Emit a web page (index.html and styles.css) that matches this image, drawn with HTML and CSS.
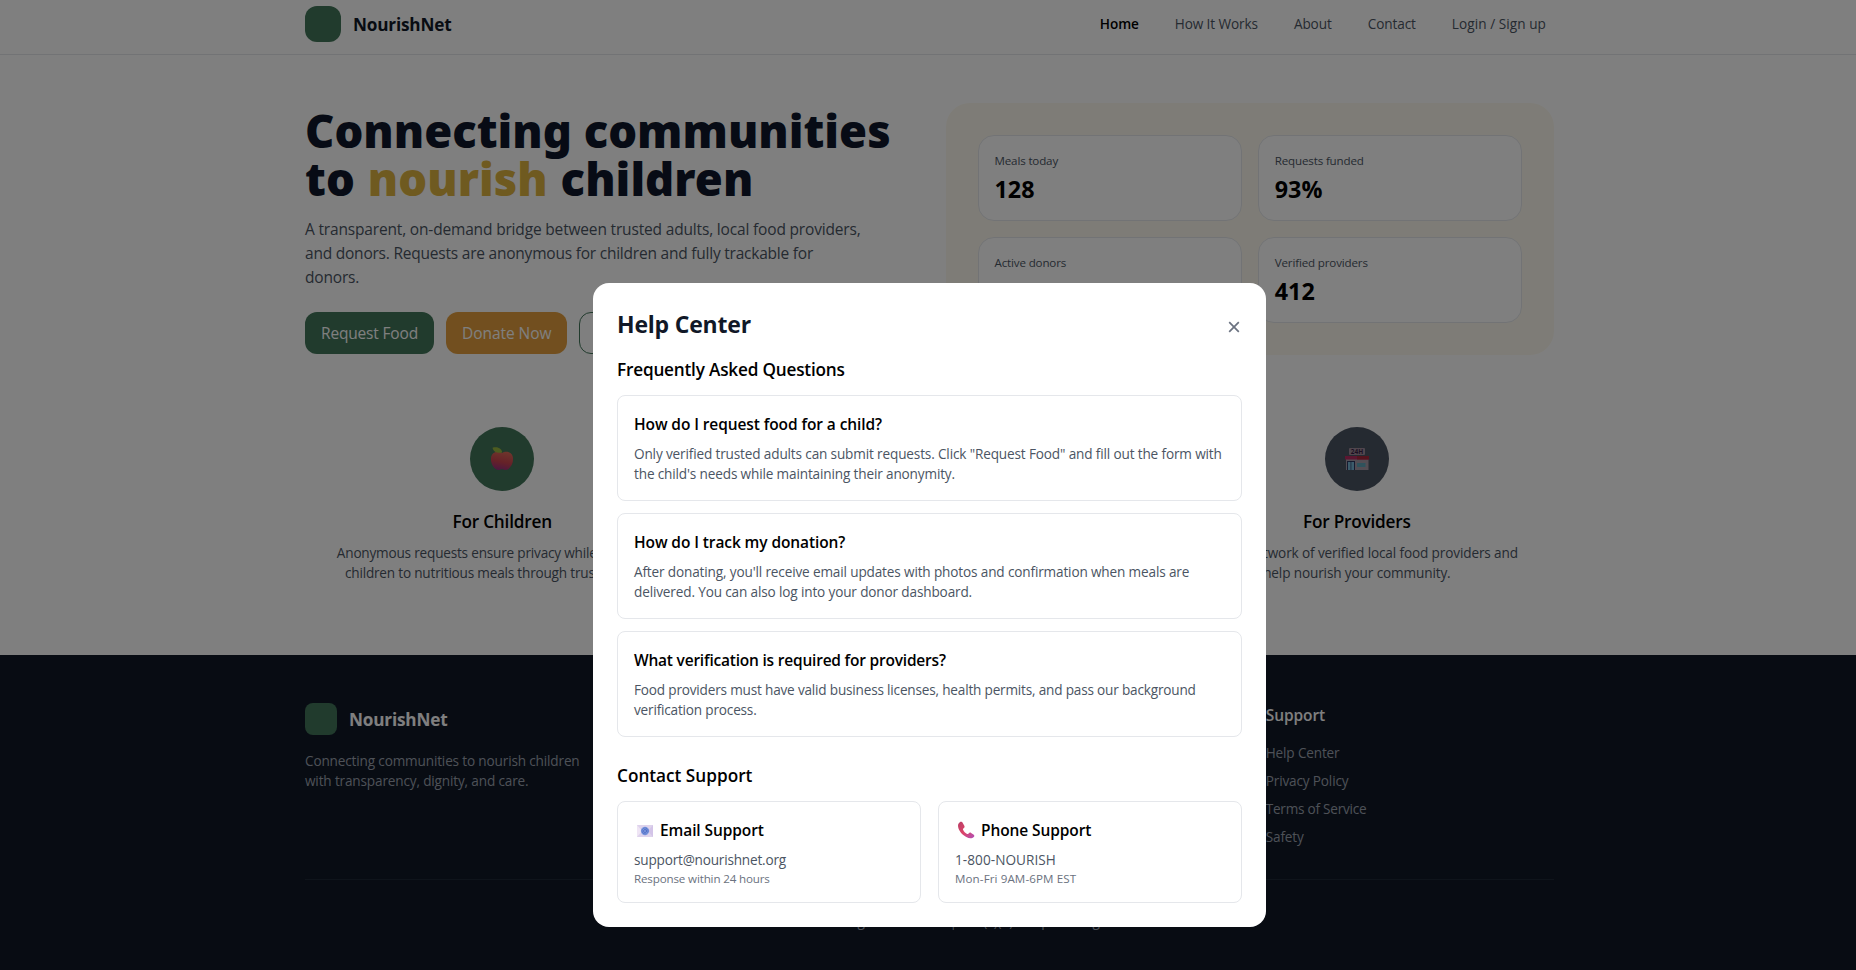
FILE: index.html
```
<!DOCTYPE html>
<html lang="en">
<head>
<meta charset="utf-8">
<title>NourishNet</title>
<link rel="stylesheet" href="styles.css">
</head>
<body>
<header class="site-header">
  <div class="container header-row">
    <div class="brand"><span class="brand-mark"></span><span class="brand-name">NourishNet</span></div>
    <nav class="nav">
      <a class="active">Home</a><a>How It Works</a><a>About</a><a>Contact</a><a class="login">Login / Sign up</a>
    </nav>
  </div>
</header>

<main>
  <section class="container hero">
    <div>
      <h1>Connecting communities<br><span class="line-two">to <em>nourish</em> children</span></h1>
      <p class="lead">A transparent, on-demand bridge between trusted adults, local food providers,<br><span class="snug">and donors. Requests are anonymous for children and fully trackable for</span><br>donors.</p>
      <div class="actions">
        <a class="btn btn-green">Request Food</a>
        <a class="btn btn-amber">Donate Now</a>
        <a class="btn btn-outline">About</a>
      </div>
    </div>
    <div class="stats">
      <div class="stat"><span class="label">Meals today</span><strong>128</strong></div>
      <div class="stat"><span class="label">Requests funded</span><strong>93%</strong></div>
      <div class="stat"><span class="label">Active donors</span><strong>56</strong></div>
      <div class="stat"><span class="label">Verified providers</span><strong>412</strong></div>
    </div>
  </section>

  <section class="container features">
    <div class="feature">
      <div class="disc disc-green">
        <svg width="24" height="26" viewBox="0 0 26 27">
          <defs><linearGradient id="apple" x1="0.6" y1="0" x2="0.35" y2="1"><stop offset="0" stop-color="#dd6a58"/><stop offset=".55" stop-color="#cc4450"/><stop offset="1" stop-color="#98307f"/></linearGradient></defs>
          <path d="M13 7c2-1.500 5-1.800 7.500-.9C23.500 7.200 25 10 25 13.500c0 5-2.500 9.200-6 11.400-2 1.200-4-.4-6-.4s-4 1.600-6 .4C3.500 22.700 1 18.500 1 13.500 1 10 2.500 7.200 5.500 6.100 8 5.200 11 5.500 13 7z" fill="url(#apple)"/>
          <path d="M2.800 1.200C7 0 12.500 1.200 13.200 6.400 9 7.400 3.500 6.200 2.800 1.200z" fill="#9bb840"/>
        </svg>
      </div>
      <h3>For Children</h3>
      <p>Anonymous requests ensure privacy while connecting<br>children to nutritious meals through trusted adults.</p>
    </div>
    <div class="feature">
      <div class="disc disc-amber"></div>
      <h3>For Donors</h3>
      <p>Track your impact in real time and see how<br>each donation helps.</p>
    </div>
    <div class="feature">
      <div class="disc disc-slate">
        <svg width="24" height="24" viewBox="0 0 24 24">
          <rect x="4" y="1" width="16" height="7" rx="1" fill="#a08c9c"/>
          <text x="12" y="6.900" text-anchor="middle" class="sign">24H</text>
          <rect x="1" y="11" width="22.500" height="12" fill="#a79aa8"/>
          <path d="M0 9h24v3.500H0z" fill="#b92d62"/>
          <path d="M12 9h12v3.500H12z" fill="#a8283c"/>
          <rect x="2" y="14" width="8" height="9" fill="#2c3760"/>
          <path d="M3 15h2.600v8H3zM6.300 15H9v8H6.300z" fill="#78b9d8"/>
          <rect x="12" y="16" width="8.500" height="4" fill="#5fa5b8"/>
        </svg>
      </div>
      <h3>For Providers</h3>
      <p class="wide">Join our network of verified local food providers and<br>help nourish your community.</p>
    </div>
  </section>
</main>

<footer class="site-footer">
  <div class="container footer-grid">
    <div>
      <div class="footer-brand"><span class="footer-mark"></span><span class="brand-name">NourishNet</span></div>
      <p>Connecting communities to nourish children<br>with transparency, dignity, and care.</p>
    </div>
    <div><h4>Platform</h4><ul><li>How It Works</li><li>Request Food</li><li>Donate</li></ul></div>
    <div><h4>Company</h4><ul><li>About</li><li>Contact</li></ul></div>
    <div><h4>Support</h4><ul><li>Help Center</li><li>Privacy Policy</li><li class="terms">Terms of Service</li><li>Safety</li></ul></div>
  </div>
  <div class="container"><p class="copyright">© 2024 NourishNet. All rights reserved. | 501(c)(3) nonprofit organization</p></div>
</footer>

<div class="overlay">
  <div class="modal">
    <div class="modal-head">
      <h2>Help Center</h2>
      <svg class="close" width="12" height="12" viewBox="0 0 12 12"><path d="M1.200 1.200l9.600 9.600M10.800 1.200L1.200 10.800" stroke="#6b7280" stroke-width="1.700" fill="none"/></svg>
    </div>
    <h3 class="section-title">Frequently Asked Questions</h3>
    <div class="faq">
      <div class="card"><h4>How do I request food for a child?</h4><p>Only verified trusted adults can submit requests. Click "Request Food" and fill out the form with<br>the child's needs while maintaining their anonymity.</p></div>
      <div class="card"><h4>How do I track my donation?</h4><p>After donating, you'll receive email updates with photos and confirmation when meals are<br>delivered. You can also log into your donor dashboard.</p></div>
      <div class="card"><h4 class="long">What verification is required for providers?</h4><p class="long">Food providers must have valid business licenses, health permits, and pass our background<br>verification process.</p></div>
    </div>
    <h3 class="section-title contact-title">Contact Support</h3>
    <div class="contacts">
      <div class="card">
        <h4 class="with-icon">
          <svg width="22" height="20" viewBox="0 0 22 20">
            <rect x="3" y="5" width="16" height="12" fill="#ded3ec"/>
            <path d="M3 5l5 6-5 6z" fill="#efe5f5"/><path d="M19 5l-5 6 5 6z" fill="#d3c4e8"/>
            <circle cx="11" cy="11" r="4.200" fill="#7f9be0"/>
            <circle cx="11" cy="11" r="1.500" fill="none" stroke="#4f6cc4" stroke-width=".9"/>
            <path d="M12.600 9.500v2.200c0 1 1.500 1 1.500-.7a3 3 0 1 0-1.600 2.600" fill="none" stroke="#4f6cc4" stroke-width=".8"/>
          </svg>
          Email Support
        </h4>
        <p class="email">support@nourishnet.org</p><small>Response within 24 hours</small>
      </div>
      <div class="card">
        <h4 class="with-icon">
          <svg width="22" height="20" viewBox="0 0 22 20">
            <defs><linearGradient id="phone" x1="0" y1="0" x2="1" y2="1"><stop offset="0" stop-color="#b84068"/><stop offset=".5" stop-color="#dd4468"/><stop offset="1" stop-color="#b050b8"/></linearGradient></defs>
            <path d="M4.800 2.200C6 1.400 7.200 2 7.900 3.200L9.300 5.700c.6 1.100.2 1.800-.7 2.500-.7.500-.8 1-.4 1.800.8 1.600 2 2.900 3.500 3.800.8.400 1.300.3 1.900-.4.700-.8 1.500-1.100 2.500-.5l2.300 1.500c1.100.7 1.200 1.700.4 2.600-1.700 1.800-4.600 1.700-7.500.1C7.100 14.800 4 11 3.200 7.300 2.700 5 3.200 3.200 4.800 2.200z" fill="url(#phone)"/>
          </svg>
          Phone Support
        </h4>
        <p class="phone">1-800-NOURISH</p><small class="hours">Mon-Fri 9AM-6PM EST</small>
      </div>
    </div>
  </div>
</div>
</body>
</html>
```

FILE: styles.css
```
* { box-sizing: border-box; margin: 0; padding: 0; }
html { overflow: hidden; background: #fff; }
body {
  position: relative;
  width: 1859px;
  height: 970px;
  overflow: hidden;
  font-family: "Open Sans", "Noto Sans", sans-serif;
  font-size: 15.1px;
  line-height: 24px;
  color: #000;
}
ul { list-style: none; }
.container { width: 1249px; margin: 0 auto; }

/* Header */
.site-header { height: 55px; padding-top: 6px; border-bottom: 1px solid #e5e7eb; }
.header-row { display: flex; justify-content: space-between; align-items: center; height: 36px; }
.brand { display: flex; align-items: center; gap: 12px; }
.brand-mark { width: 36px; height: 36px; border-radius: 12px; background: #42765a; }
.brand-name { padding-top: 1px; font-size: 17.2px; font-weight: 700; letter-spacing: -0.2px; color: #111827; }
.nav { display: flex; gap: 36px; padding-right: 8px; font-size: 13.6px; line-height: 20px; letter-spacing: -0.1px; color: #4b5563; }
.nav .active { font-weight: 600; color: #000; }
.nav .login { letter-spacing: 0.06px; }

/* Hero */
.hero { display: grid; grid-template-columns: 1fr 1fr; gap: 32px; padding-top: 48px; }
h1 {
  padding-top: 3px;
  font-family: "Noto Sans", sans-serif;
  font-size: 45.4px;
  font-weight: 900;
  line-height: 48px;
  color: #0f172a;
  white-space: nowrap;
}
.line-two { letter-spacing: 0.05px; word-spacing: 1px; }
h1 em { font-style: normal; color: #dfb441; }
.lead { margin-top: 15px; font-size: 15.500px; letter-spacing: -0.17px; color: #4b5563; white-space: nowrap; }
.snug { letter-spacing: -0.22px; }
.actions { display: flex; gap: 12px; margin-top: 23px; }
.btn {
  height: 42px;
  padding: 0 15px;
  border: 1px solid transparent;
  border-radius: 12px;
  font-size: 15.500px;
  line-height: 40px;
  letter-spacing: -0.17px;
  color: #fff;
  white-space: nowrap;
}
.btn-green { background: #42765a; }
.btn-amber { background: #e49f3e; letter-spacing: -0.05px; }
.btn-outline { border-color: #42765a; color: #42765a; }
.stats {
  display: grid;
  grid-template-columns: 1fr 1fr;
  gap: 16px;
  padding: 32px;
  border-radius: 24px;
  background: #fdf9ee;
}
.stat {
  display: flex;
  flex-direction: column;
  gap: 4px;
  height: 86px;
  padding: 16px;
  border: 1px solid #e5e7eb;
  border-radius: 16px;
  background: #fff;
}
.stat .label { font-size: 11.600px; line-height: 18px; letter-spacing: -0.16px; color: #4b5563; }
.stat strong { font-size: 23.300px; line-height: 30px; }

/* Features */
.features { display: grid; grid-template-columns: repeat(3, 1fr); gap: 33px; padding: 48px 0; }
.feature { display: flex; flex-direction: column; align-items: center; padding: 24px; text-align: center; }
.disc { display: flex; align-items: center; justify-content: center; width: 64px; height: 64px; border-radius: 50%; }
.disc-green { background: #42765a; }
.disc-amber { background: #e49f3e; }
.disc-slate { background: #4b5563; }
.sign { font: 700 6.500px "Open Sans", sans-serif; fill: #3a1f45; }
.feature h3 { margin-top: 17px; font-size: 17.2px; font-weight: 600; line-height: 28px; letter-spacing: -0.2px; }
.feature p { margin-top: 7px; font-size: 13.600px; line-height: 20px; letter-spacing: -0.2px; color: #4b5563; white-space: nowrap; }
.feature p.wide { letter-spacing: -0.13px; }

/* Footer */
.site-footer { height: 315px; padding-top: 48px; background: #111827; color: #9ca3af; font-size: 13.600px; line-height: 20px; letter-spacing: -0.16px; }
.footer-grid { display: grid; grid-template-columns: repeat(4, 1fr); gap: 32px; }
.footer-brand { display: flex; align-items: center; gap: 12px; height: 32px; margin-bottom: 16px; }
.footer-mark { width: 32px; height: 32px; border-radius: 8px; background: #42765a; }
.footer-brand .brand-name { color: #fff; }
.footer-grid p { white-space: nowrap; }
.footer-grid h4 { margin-bottom: 16px; font-size: 15.500px; font-weight: 600; line-height: 24px; letter-spacing: -0.1px; color: #fff; }
.footer-grid ul { display: grid; gap: 8px; }
.terms { letter-spacing: -0.25px; }
.copyright { margin-top: 32px; padding-top: 31px; border-top: 1px solid #1f2937; text-align: center; letter-spacing: -0.09px; }

/* Help dialog */
.overlay {
  position: absolute;
  inset: 0;
  display: flex;
  justify-content: center;
  align-items: flex-start;
  padding-top: 283px;
  background: rgba(0, 0, 0, 0.5);
}
.modal { width: 673px; height: 644px; padding: 24px; border-radius: 16px; background: #fff; }
.modal-head { display: flex; justify-content: space-between; align-items: center; height: 32px; margin-bottom: 16px; }
.modal-head h2 { padding-top: 1px; font-size: 23px; font-weight: 700; line-height: 32px; letter-spacing: -0.2px; color: #111827; }
.close { margin: 7px 2px 0 0; }
.section-title { padding-top: 1px; margin-bottom: 11px; font-size: 17.2px; font-weight: 600; line-height: 28px; letter-spacing: -0.2px; }
.contact-title { letter-spacing: 0; }
.faq { display: grid; gap: 12px; margin-bottom: 24px; }
.card { padding: 16px; border: 1px solid #e5e7eb; border-radius: 8px; }
.card h4 { margin-bottom: 8px; font-size: 15.500px; font-weight: 600; line-height: 24px; letter-spacing: -0.1px; }
.card h4.long { letter-spacing: -0.21px; }
.card p { font-size: 13.600px; line-height: 20px; letter-spacing: -0.15px; color: #4b5563; white-space: nowrap; }
.card p.long { letter-spacing: -0.19px; }
.card p.email { letter-spacing: -0.2px; }
.card small { display: block; padding-top: 1px; font-size: 11.600px; line-height: 15px; letter-spacing: -0.15px; color: #6b7280; }
.contacts { display: grid; grid-template-columns: 1fr 1fr; gap: 17px; }
.with-icon { display: flex; align-items: center; gap: 4px; }
.card .phone { letter-spacing: 0.05px; }
.card .hours { letter-spacing: 0.1px; }
```
